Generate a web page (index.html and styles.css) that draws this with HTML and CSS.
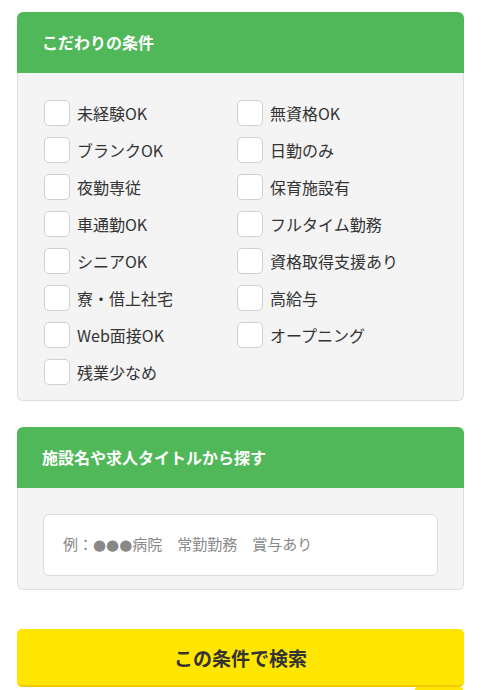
FILE: index.html
```html
<!DOCTYPE html>
<html lang="ja">
<head>
  <meta charset="UTF-8">
  <meta name="viewport" content="width=device-width, initial-scale=1.0">
  <title>求人検索</title>
  <link rel="stylesheet" href="styles.css">
</head>
<body>

  <div class="container">

    <div class="search-box">
      <h2>こだわりの条件</h2>
      <div class="search-body">
        <ul class="check-list">
          <li><label><span class="check"></span>未経験OK</label></li>
          <li><label><span class="check"></span>無資格OK</label></li>
          <li><label><span class="check"></span>ブランクOK</label></li>
          <li><label><span class="check"></span>日勤のみ</label></li>
          <li><label><span class="check"></span>夜勤専従</label></li>
          <li><label><span class="check"></span>保育施設有</label></li>
          <li><label><span class="check"></span>車通勤OK</label></li>
          <li><label><span class="check"></span>フルタイム勤務</label></li>
          <li><label><span class="check"></span>シニアOK</label></li>
          <li><label><span class="check"></span>資格取得支援あり</label></li>
          <li><label><span class="check"></span>寮・借上社宅</label></li>
          <li><label><span class="check"></span>高給与</label></li>
          <li><label><span class="check"></span>Web面接OK</label></li>
          <li><label><span class="check"></span>オープニング</label></li>
          <li><label><span class="check"></span>残業少なめ</label></li>
        </ul>
      </div>
    </div>

    <div class="search-box">
      <h2>施設名や求人タイトルから探す</h2>
      <div class="search-body keyword-body">
        <input type="text" class="keyword" placeholder="例：●●●病院　常勤勤務　賞与あり">
      </div>
    </div>

    <button class="search-button">この条件で検索</button>
  </div>

  <div class="page-top"></div>

</body>
</html>
```

FILE: styles.css
```css
body {
  font-family: "Noto Sans CJK JP", "Noto Sans", sans-serif;
  background-color: #fff;
  color: #333;
  margin: 0;
  padding: 0;
}
.container {
  padding: 12px 21px 0 17px;
}
.search-box {
  margin-bottom: 26px;
}
.search-box h2 {
  margin: 0;
  height: 61px;
  line-height: 61px;
  padding-left: 25px;
  background-color: #51b85a;
  color: white;
  font-size: 16px;
  font-weight: bold;
  border-radius: 6px 6px 0 0;
}
.search-body {
  background-color: #f4f4f4;
  border: 1px solid #dedede;
  border-top: none;
  border-radius: 0 0 6px 6px;
  padding: 27px 25px 15px 26px;
}
.check-list {
  list-style-type: none;
  margin: 0;
  padding: 0;
  display: grid;
  grid-template-columns: 193px 1fr;
  row-gap: 11px;
}
.check-list label {
  display: flex;
  align-items: center;
  height: 26px;
  font-size: 16px;
  color: #333;
  cursor: pointer;
}
.check {
  width: 24px;
  height: 24px;
  background-color: white;
  border: 1px solid #d0d0d0;
  border-radius: 5px;
  margin-right: 7px;
  flex-shrink: 0;
}
.keyword-body {
  padding: 26px 25px 13px 25px;
}
.keyword {
  display: block;
  box-sizing: border-box;
  width: 100%;
  height: 62px;
  padding: 0 19px;
  background-color: white;
  border: 1px solid #dcdcdc;
  border-radius: 6px;
  font-family: "DejaVu Sans", "Noto Sans CJK JP", sans-serif;
  font-size: 15px;
  color: #333;
}
.keyword::placeholder {
  color: #888;
}
.search-button {
  display: block;
  width: 100%;
  height: 58px;
  margin-top: 39px;
  background-color: #ffe600;
  border: none;
  border-bottom: 2px solid #f5c800;
  border-radius: 5px;
  font-family: inherit;
  font-size: 19px;
  font-weight: bold;
  color: #333;
  cursor: pointer;
}
.page-top {
  position: fixed;
  right: 22px;
  bottom: 0;
  width: 48px;
  height: 3px;
  background-color: #ffe600;
  border-radius: 4px 4px 0 0;
}
```
